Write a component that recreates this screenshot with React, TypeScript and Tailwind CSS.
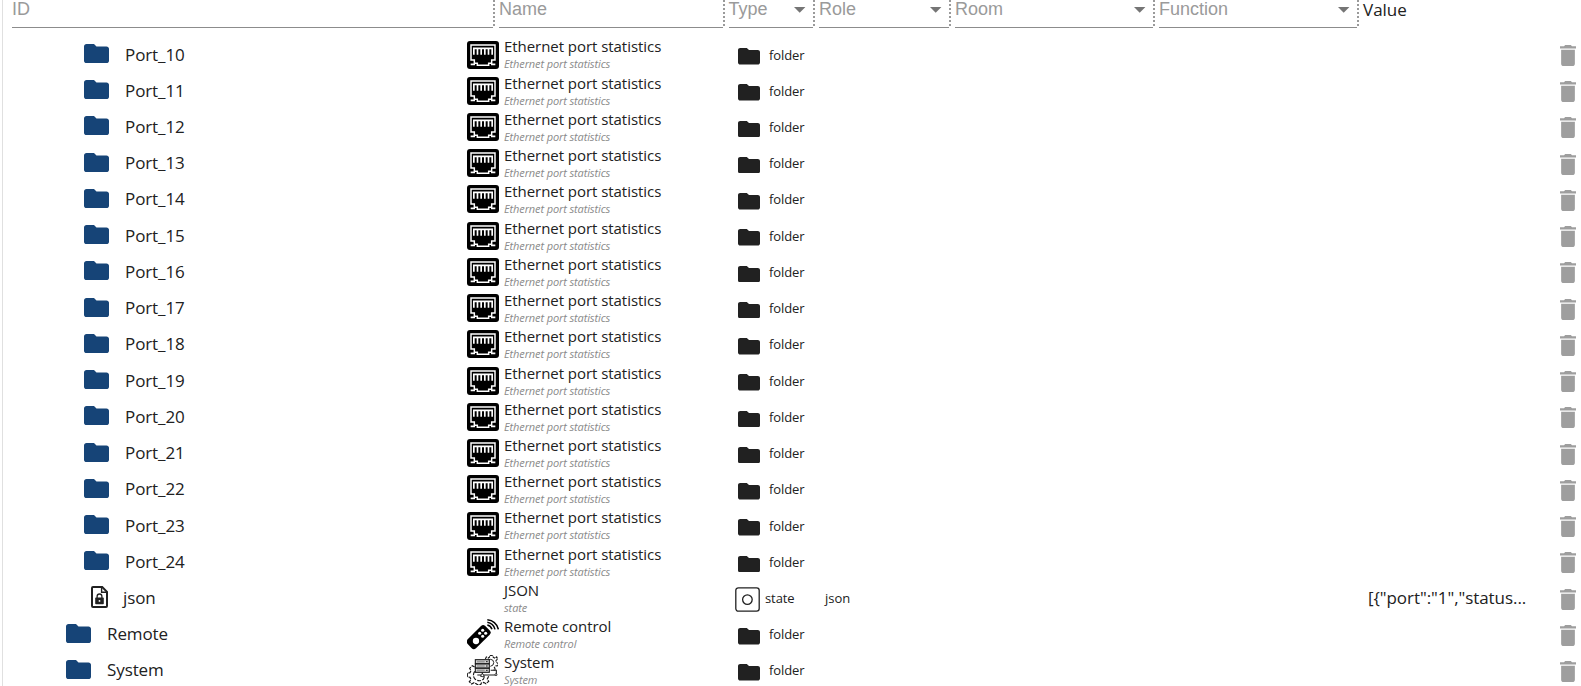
import type { ReactNode } from "react";

type Kind = "port" | "json" | "remote" | "system";
interface Item {
  id: string;
  title: string;
  sub: string;
  kind: Kind;
}

const items: Item[] = [
  ...Array.from({ length: 15 }, (_, i): Item => ({
    id: `Port_${i + 10}`,
    title: "Ethernet port statistics",
    sub: "Ethernet port statistics",
    kind: "port",
  })),
  { id: "json", title: "JSON", sub: "state", kind: "json" },
  { id: "Remote", title: "Remote control", sub: "Remote control", kind: "remote" },
  { id: "System", title: "System", sub: "System", kind: "system" },
];

function Folder({ className }: { className: string }) {
  return (
    <svg viewBox="2 4 20 16" preserveAspectRatio="none" fill="currentColor" className={className}>
      <path d="M10 4H4c-1.1 0-2 .9-2 2v12c0 1.1.9 2 2 2h16c1.1 0 2-.9 2-2V8c0-1.1-.9-2-2-2h-8l-2-2z" />
    </svg>
  );
}

function LockedFile() {
  return (
    <svg viewBox="0 0 17 22" className="h-[22px] w-[17px]">
      <path d="M1 1.9Q1 1 2 1H11.2L16 5.8V20Q16 21 15 21H2Q1 21 1 20Z" fill="none" stroke="#212121" strokeWidth="2" />
      <path d="M10.6 1V6.3H16" fill="none" stroke="#212121" strokeWidth="1.4" />
      <rect x="4.2" y="11.6" width="8.6" height="6.6" rx="0.8" fill="#212121" />
      <path d="M6.1 12V10.4a2.4 2.4 0 0 1 4.8 0V12" fill="none" stroke="#212121" strokeWidth="1.3" />
      <circle cx="8.5" cy="14.9" r="0.9" fill="#fff" />
    </svg>
  );
}

function Ethernet() {
  return (
    <svg viewBox="0 0 96 84" className="h-7 w-8">
      <rect width="96" height="84" rx="9" />
      <path d="M12 12H84V57H74V67H65V73H31V67H22V57H12Z" fill="none" stroke="#fff" strokeWidth="4.4" />
      <path d="M18 22H78M20.5 22V41M31.5 22V41M42.5 22V41M53.5 22V41M64.5 22V41M75.5 22V41" fill="none" stroke="#fff" strokeWidth="5" />
      <path d="M11 70H24M72 70H85" stroke="#fff" strokeWidth="5" />
    </svg>
  );
}

function RemoteControl() {
  return (
    <svg viewBox="0 0 96 93" className="h-[31px] w-8">
      <path d="M2 61L42 21Q48 15 54 20L69 35Q74 41 68 47L27 88Q20 94 14 88L2 75Q-4 68 2 61Z" />
      <circle cx="27" cy="66" r="9.5" fill="#fff" />
      <g fill="#fff">
        <circle cx="47" cy="34" r="4.6" />
        <circle cx="38" cy="43" r="4.6" />
        <circle cx="56" cy="43" r="4.6" />
        <circle cx="47" cy="52" r="4.6" />
      </g>
      <path d="M61 18Q71 20 75 31M61 10Q79 13 84 31M61 2.5Q87 5 94 31" fill="none" stroke="#000" strokeWidth="4.6" />
    </svg>
  );
}

function SystemGears() {
  return (
    <svg viewBox="0 0 93 90" className="h-[30px] w-[31px]" fill="none" stroke="#1a1a1a">
      <path d="M23 36L16 32L8 40L12 47L9 53L1 55V65L9 67L12 74L7 80L14 87L21 83L29 87L31 89H41L43 84L50 82L57 86L65 79L61 72L65 64" strokeWidth="3.6" strokeDasharray="11 3" />
      <path d="M23 49Q15 62 24 72Q36 82 49 73L52 65" strokeWidth="3.4" strokeDasharray="12 4" />
      <path d="M55 12L58 6L64 9L67 7L69 1H77L79 7L84 10L89 6L92 12L87 17L88 22L93 25V32L86 33L82 38L85 43L80 46" strokeWidth="3.4" strokeDasharray="9 2.5" />
      <path d="M64 15Q70 11 77 15Q83 22 78 30L70 34" strokeWidth="2.8" />
      <rect x="25" y="14" width="42" height="12" fill="#d0d0d0" strokeWidth="3.2" />
      <rect x="25" y="27" width="42" height="12" fill="#d0d0d0" strokeWidth="3.2" />
      <rect x="25" y="40" width="42" height="12" fill="#d0d0d0" strokeWidth="3.2" />
      <path d="M30 20H53M30 33H53M30 46H53" stroke="#999" strokeWidth="5" />
      <path d="M57 20H62M57 33H62M57 46H62" strokeWidth="3" />
      <path d="M46 52V58M31 60H88M88 44V60M71 46H88M40 64H53" strokeWidth="3.2" />
      <circle cx="46" cy="61" r="4" fill="#fff" strokeWidth="2.5" />
      <circle cx="87" cy="59" r="3" fill="#fff" strokeWidth="2.5" />
    </svg>
  );
}

function StateIcon() {
  return (
    <svg viewBox="0 0 25 25" className="h-[25px] w-[25px]" fill="none" stroke="#212121">
      <rect x="0.8" y="0.8" width="23.4" height="23.4" rx="2.6" strokeWidth="1.3" />
      <circle cx="12.4" cy="12.6" r="4.8" strokeWidth="1.3" />
    </svg>
  );
}

function Trash() {
  return (
    <svg viewBox="5 3 14 18" preserveAspectRatio="none" fill="#9e9e9e" className="h-[21px] w-4">
      <path d="M6 19c0 1.1.9 2 2 2h8c1.1 0 2-.9 2-2V7H6v12zM19 4h-3.5l-1-1h-5l-1 1H5v2h14V4z" />
    </svg>
  );
}

const nameIcons: Record<Kind, ReactNode> = {
  port: <Ethernet />,
  json: null,
  remote: <RemoteControl />,
  system: <SystemGears />,
};

function HeadCell({ label, width, select = true }: { label: string; width: string; select?: boolean }) {
  return (
    <div className={`flex ${width}`}>
      <div className="flex h-7 flex-1 justify-between border-b border-[#8c8c8c] pr-[7px] font-['Liberation_Sans',sans-serif] text-lg leading-[18px] text-[#9a9a9a]">
        <span>{label}</span>
        {select && (
          <svg viewBox="0 0 12 6" className="mt-[7px] h-[6px] w-[12px]">
            <path d="M0 0H11.4L5.7 5.7Z" fill="#757575" />
          </svg>
        )}
      </div>
      <div className="h-[26px] w-[2px] bg-[repeating-linear-gradient(to_bottom,#9a9a9a_0_2px,transparent_2px_4px)]" />
    </div>
  );
}

function Row({ item }: { item: Item }) {
  const isState = item.kind === "json";
  const indent = item.kind === "port" ? "pl-[84px]" : isState ? "pl-[91px]" : "pl-[66px]";
  return (
    <div className="flex h-[36.235px] shrink-0 items-center">
      <div className={`flex w-[467px] shrink-0 items-center ${indent}`}>
        {isState ? (
          <div className="-mt-[3px] w-[32px]">
            <LockedFile />
          </div>
        ) : (
          <Folder className="mr-[16px] -mt-[2px] h-[19px] w-[25px] text-[#164477]" />
        )}
        <span className="text-[17px] leading-6 tracking-[-0.1px]">{item.id}</span>
      </div>
      <div className="flex w-[37px] shrink-0 items-center">{nameIcons[item.kind]}</div>
      <div className="flex h-full w-[231px] shrink-0 flex-col">
        <span className="text-[15px] leading-5 tracking-[-0.05px]">{item.title}</span>
        <span className="text-[11px] leading-4 tracking-[-0.12px] text-[#8a8a8a] italic">{item.sub}</span>
      </div>
      <div className="flex w-[88px] shrink-0 items-center text-[13px] leading-5">
        {isState ? (
          <div className="mr-[5px] pt-[2px]">
            <StateIcon />
          </div>
        ) : (
          <Folder className="mt-1 mr-[9px] ml-[3px] h-[16.5px] w-[22px] text-[#212121]" />
        )}
        <span className="tracking-[-0.1px]">{isState ? "state" : "folder"}</span>
      </div>
      <div className="w-[545px] shrink-0 pl-[2px] text-[13px] leading-5">{isState && "json"}</div>
      <div className="w-[191.5px] shrink-0 text-[17px] leading-6 tracking-[-0.06px] whitespace-nowrap">
        {isState && '[{"port":"1","status...'}
      </div>
      <div className="pt-[2px]">
        <Trash />
      </div>
    </div>
  );
}

export default function App() {
  return (
    <div className="flex h-[686px] w-[1581px] overflow-hidden bg-white font-['Open_Sans','Noto_Sans',sans-serif] text-[#212121]">
      <div className="-mr-[3px] ml-[2px] w-px shrink-0 bg-[#e0e0e0]" />
      <div className="flex w-[1581px] shrink-0 flex-col">
        <div className="flex h-[36.4px] shrink-0 items-start gap-1 pl-3">
          <HeadCell label="ID" width="w-[483px]" select={false} />
          <HeadCell label="Name" width="w-[225.5px]" select={false} />
          <HeadCell label="Type" width="w-[86.5px]" />
          <HeadCell label="Role" width="w-[132px]" />
          <HeadCell label="Room" width="w-[200px]" />
          <HeadCell label="Function" width="w-[200px]" />
          <span className="h-5 text-[17px] leading-5">Value</span>
        </div>
        {items.map((item) => (
          <Row key={item.id} item={item} />
        ))}
      </div>
    </div>
  );
}
